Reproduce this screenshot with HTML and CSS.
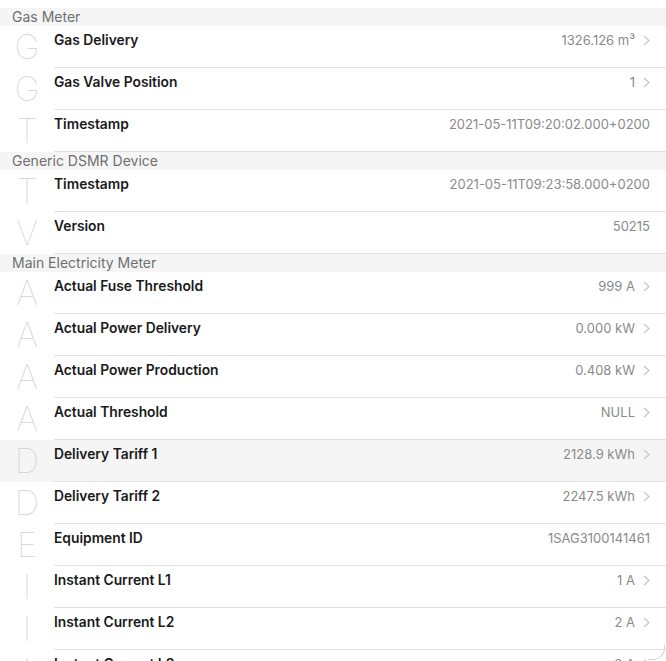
FILE: index.html
```html
<!DOCTYPE html>
<html>
<head>
<meta charset="utf-8">
<link rel="stylesheet" href="styles.css">
</head>
<body>
<div class="list">
  <div class="section">Gas Meter</div>
  <div class="row"><div class="icon">G</div><div class="body"><span class="title">Gas Delivery</span><span class="value">1326.126 m³<svg class="chev" viewBox="0 0 7 11"><polyline points="1,1 6,5.5 1,10"/></svg></span></div></div>
  <div class="row"><div class="icon">G</div><div class="body"><span class="title">Gas Valve Position</span><span class="value">1<svg class="chev" viewBox="0 0 7 11"><polyline points="1,1 6,5.5 1,10"/></svg></span></div></div>
  <div class="row"><div class="icon">T</div><div class="body"><span class="title">Timestamp</span><span class="value">2021-05-11T09:20:02.000+0200</span></div></div>

  <div class="section">Generic DSMR Device</div>
  <div class="row"><div class="icon">T</div><div class="body"><span class="title">Timestamp</span><span class="value">2021-05-11T09:23:58.000+0200</span></div></div>
  <div class="row"><div class="icon">V</div><div class="body"><span class="title">Version</span><span class="value">50215</span></div></div>

  <div class="section">Main Electricity Meter</div>
  <div class="row"><div class="icon">A</div><div class="body"><span class="title">Actual Fuse Threshold</span><span class="value">999 A<svg class="chev" viewBox="0 0 7 11"><polyline points="1,1 6,5.5 1,10"/></svg></span></div></div>
  <div class="row"><div class="icon">A</div><div class="body"><span class="title">Actual Power Delivery</span><span class="value">0.000 kW<svg class="chev" viewBox="0 0 7 11"><polyline points="1,1 6,5.5 1,10"/></svg></span></div></div>
  <div class="row"><div class="icon">A</div><div class="body"><span class="title">Actual Power Production</span><span class="value">0.408 kW<svg class="chev" viewBox="0 0 7 11"><polyline points="1,1 6,5.5 1,10"/></svg></span></div></div>
  <div class="row"><div class="icon">A</div><div class="body"><span class="title">Actual Threshold</span><span class="value">NULL<svg class="chev" viewBox="0 0 7 11"><polyline points="1,1 6,5.5 1,10"/></svg></span></div></div>
  <div class="row selected"><div class="icon">D</div><div class="body"><span class="title">Delivery Tariff 1</span><span class="value">2128.9 kWh<svg class="chev" viewBox="0 0 7 11"><polyline points="1,1 6,5.5 1,10"/></svg></span></div></div>
  <div class="row"><div class="icon">D</div><div class="body"><span class="title">Delivery Tariff 2</span><span class="value">2247.5 kWh<svg class="chev" viewBox="0 0 7 11"><polyline points="1,1 6,5.5 1,10"/></svg></span></div></div>
  <div class="row"><div class="icon">E</div><div class="body"><span class="title">Equipment ID</span><span class="value">1SAG3100141461</span></div></div>
  <div class="row"><div class="icon">I</div><div class="body"><span class="title">Instant Current L1</span><span class="value">1 A<svg class="chev" viewBox="0 0 7 11"><polyline points="1,1 6,5.5 1,10"/></svg></span></div></div>
  <div class="row"><div class="icon">I</div><div class="body"><span class="title">Instant Current L2</span><span class="value">2 A<svg class="chev" viewBox="0 0 7 11"><polyline points="1,1 6,5.5 1,10"/></svg></span></div></div>
  <div class="row"><div class="icon">I</div><div class="body"><span class="title">Instant Current L3</span><span class="value">3 A<svg class="chev" viewBox="0 0 7 11"><polyline points="1,1 6,5.5 1,10"/></svg></span></div></div>
</div>
<div class="corner"></div>
</body>
</html>
```
FILE: styles.css
```css
html, body {
  margin: 0;
  padding: 0;
  background: #ffffff;
  overflow: hidden;
}
body {
  font-family: Inter, "Liberation Sans", sans-serif;
  color: #1c1c1c;
}
.list {
  padding-top: 8px;
}
.section {
  height: 18px;
  line-height: 18px;
  background: #f5f5f5;
  color: #6f6f6f;
  font-size: 14px;
  padding-left: 12px;
}
.row {
  display: flex;
  height: 42px;
}
.row.selected {
  background: #f5f5f5;
}
.icon {
  width: 54px;
  flex: none;
  display: flex;
  align-items: center;
  justify-content: center;
  font-family: Inter, sans-serif;
  font-weight: 100;
  font-size: 34px;
  color: #d2d2d2;
  line-height: 1;
}
.body {
  flex: 1;
  box-sizing: border-box;
  border-bottom: 1px solid #e2e2e2;
  display: flex;
  justify-content: space-between;
  align-items: flex-start;
  padding: 6px 16px 0 0;
  line-height: 17px;
}
.title {
  font-size: 13.8px;
  font-weight: 600;
  color: #1a1a1a;
}
.value {
  font-size: 13px;
  color: #8a8a8a;
  display: flex;
  align-items: center;
}
.chev {
  width: 7px;
  height: 11px;
  margin-left: 8px;
  fill: none;
  stroke: #c6c6c6;
  stroke-width: 1.2;
}
.corner {
  position: fixed;
  right: 1px;
  bottom: 1px;
  width: 16px;
  height: 14px;
  border-right: 1px solid #d6d6d6;
  border-bottom: 1px solid #d6d6d6;
  border-bottom-right-radius: 12px;
  pointer-events: none;
}
```
